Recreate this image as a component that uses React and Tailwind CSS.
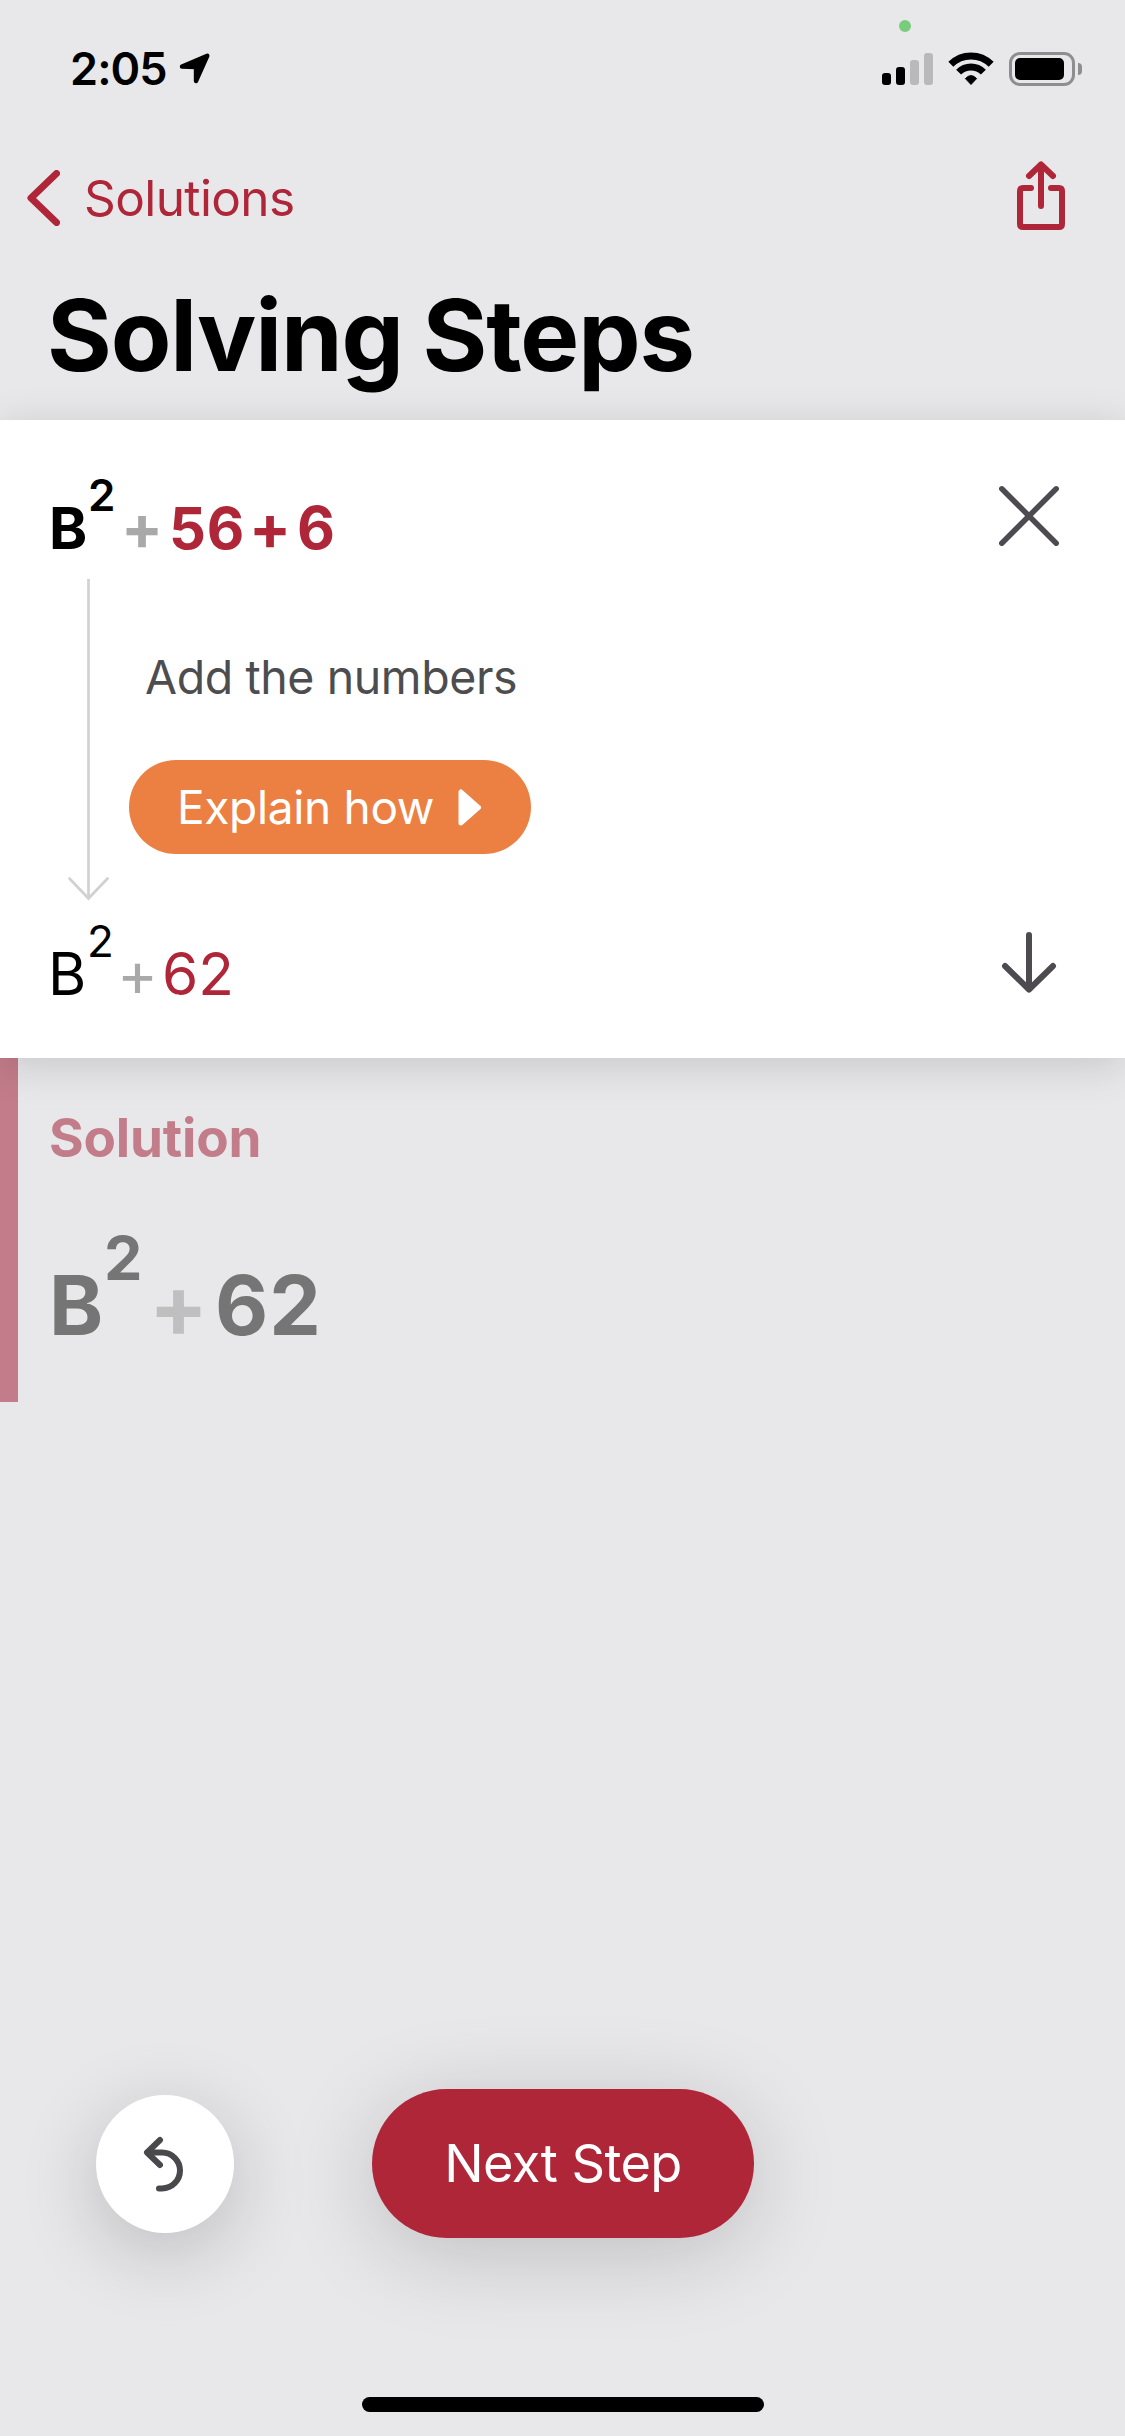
import React from "react";

function StatusBar() {
  return (
    <header className="relative flex h-[140px] shrink-0 items-start">
      <div className="flex pt-[38px] pl-[70px]">
        <span className="w-[108px] text-[45px] leading-[61px] font-semibold tracking-[-0.9px]">2:05</span>
        <svg className="mt-[14px]" width="34" height="34" viewBox="0 0 34 34">
          <path d="M4 14.5 29.3 3.8 18 29V15Z" fill="#000" stroke="#000" strokeWidth="4.4" strokeLinejoin="round" />
        </svg>
      </div>
      <span className="absolute top-[20px] left-[899px] size-[12px] rounded-full bg-[#78cd7d]" />
      <div className="mt-[52px] mr-[43px] ml-auto flex h-[34px] items-start">
        <div className="flex h-[33px] items-end gap-[5px]">
          <span className="h-[12px] w-[9px] rounded-[3px] bg-black" />
          <span className="h-[18px] w-[9px] rounded-[3px] bg-black" />
          <span className="h-[25px] w-[9px] rounded-[3px] bg-[#b9b9bb]" />
          <span className="h-[32px] w-[9px] rounded-[3px] bg-[#b9b9bb]" />
        </div>
        <svg className="ml-[15px]" width="46" height="34" viewBox="0 0 46 34">
          <path d="M2.85 12.35A28.5 28.5 0 0 1 43.15 12.35" fill="none" stroke="#000" strokeWidth="7" />
          <path d="M10.63 20.13A17.5 17.5 0 0 1 35.37 20.13" fill="none" stroke="#000" strokeWidth="7" />
          <path d="M23 32.5 17.4 26.6Q23 20.6 28.6 26.6Z" fill="#000" stroke="#000" strokeWidth="1" strokeLinejoin="round" />
        </svg>
        <div className="ml-[15px] flex items-center">
          <div className="h-[34px] w-[66px] rounded-[11px] border-[3px] border-[#8e8e90] p-[3px]">
            <div className="h-[22px] w-[49px] rounded-[5px] bg-black" />
          </div>
          <span className="ml-[3px] h-[12px] w-[4px] rounded-r-full bg-[#8e8e90]" />
        </div>
      </div>
    </header>
  );
}

function NavBar() {
  return (
    <nav className="flex h-[120px] shrink-0 items-start text-[#af2639]">
      <svg className="mt-[30px] ml-[27px]" width="33" height="56" viewBox="0 0 33 56">
        <path d="M29.5 3.5 4 28 29.5 52.5" fill="none" stroke="currentColor" strokeWidth="7" strokeLinecap="round" strokeLinejoin="round" />
      </svg>
      <span className="mt-[28px] ml-[24px] text-[49.5px] leading-[60px] tracking-[-0.6px]">Solutions</span>
      <svg className="mt-[21px] mr-[60px] ml-auto" width="48" height="69" viewBox="0 0 48 69" fill="none" stroke="currentColor" strokeWidth="6" strokeLinecap="round" strokeLinejoin="round">
        <path d="M14 27H6Q3 27 3 30V63Q3 66 6 66H42Q45 66 45 63V30Q45 27 42 27H34" />
        <path d="M24 45V4M12 15 24 3.5 36 15" />
      </svg>
    </nav>
  );
}

function StepCard() {
  return (
    <section className="relative z-10 flex h-[638px] shrink-0 flex-col bg-white shadow-[0_7px_40px_rgba(0,0,0,0.15)]">
      <div className="flex h-[159px] shrink-0 items-start pr-[65px] pl-[49px]">
        <div className="mt-[53px] flex items-start text-[57.8px] leading-[70px] font-bold">
          <span className="mt-[20px] w-[39px]">B</span>
          <span className="w-[33px] text-[44px] leading-[44px] font-semibold">2</span>
          <span className="mt-[20px] w-[48px] text-[62px] text-[#a9a9a9]">+</span>
          <span className="mt-[20px] w-[80px] tracking-[0.8px] text-[#af2639]">56</span>
          <span className="mt-[20px] w-[48px] text-[62px] text-[#af2639]">+</span>
          <span className="mt-[20px] text-[58.5px] text-[#af2639]">6</span>
        </div>
        <svg className="mt-[65px] ml-auto" width="62" height="62" viewBox="0 0 62 62">
          <path d="M3.8 3.8 58.2 58.2M58.2 3.8 3.8 58.2" stroke="#4d4b50" strokeWidth="5.5" strokeLinecap="round" />
        </svg>
      </div>

      <div className="flex h-[323px] shrink-0 items-start pl-[66px]">
        <svg width="45" height="322" viewBox="0 0 45 322" fill="none" stroke="#d1d1d1" strokeWidth="2.7">
          <path d="M22.5 0V320" />
          <path d="M3.5 299.5 22.5 319.5 41.5 299.5" strokeLinecap="round" />
        </svg>
        <div className="ml-[18px] flex flex-col items-start">
          <p className="mt-[68px] pl-[16px] text-[46.5px] leading-[60px] tracking-[-0.41px] whitespace-nowrap text-[#4d4d50]">Add the numbers</p>
          <button className="mt-[53px] flex h-[94px] w-[402px] items-center rounded-full bg-[#ec8042] pl-[48px] text-[46px] leading-[60px] tracking-[-0.33px] whitespace-nowrap text-white">
            Explain how
            <svg className="ml-[24px]" width="24" height="37" viewBox="0 0 24 37">
              <path d="M3 3V34L20.5 18.5Z" fill="#fff" stroke="#fff" strokeWidth="5" strokeLinejoin="round" />
            </svg>
          </button>
        </div>
      </div>

      <div className="flex items-start pr-[68px] pl-[48px]">
        <div className="mt-[17px] flex items-start text-[58.5px] leading-[70px]">
          <span className="mt-[20px] w-[39px]">B</span>
          <span className="w-[30px] text-[44px] leading-[44px]">2</span>
          <span className="mt-[20px] w-[45px] text-[62px] text-[#a9a9a9]">+</span>
          <span className="mt-[20px] text-[#af2639]">62</span>
        </div>
        <svg className="mt-[29px] ml-auto" width="56" height="63" viewBox="0 0 56 63" fill="none" stroke="#4d4b50" strokeWidth="6" strokeLinecap="round" strokeLinejoin="round">
          <path d="M28 4V58M4 35 28 58.5 52 35" />
        </svg>
      </div>
    </section>
  );
}

function Solution() {
  return (
    <section className="flex h-[344px] shrink-0 flex-col border-l-[18px] border-[#c37c8a] pl-[31px]">
      <h2 className="mt-[50px] text-[53px] leading-[60px] font-bold tracking-[-0.2px] text-[#c37c8a]">Solution</h2>
      <div className="mt-[60px] flex items-start text-[82px] leading-[100px] font-bold text-[#757575]">
        <span className="mt-[28px] w-[55px]">B</span>
        <span className="w-[45px] text-[61px] leading-[61px]">2</span>
        <span className="mt-[28px] w-[66px] text-[87px] text-[#bfbfbf]">+</span>
        <span className="mt-[28px] tracking-[1px]">62</span>
      </div>
    </section>
  );
}

function Controls() {
  return (
    <footer className="mt-auto flex h-[347px] shrink-0 flex-col">
      <div className="flex items-start pl-[96px]">
        <button className="mt-[6px] flex size-[138px] items-start rounded-full bg-white shadow-[0_18px_80px_rgba(0,0,0,0.2)]">
          <svg className="mt-[41px] ml-[47px]" width="42" height="56" viewBox="0 0 42 56" fill="none" stroke="#48484d" strokeWidth="6" strokeLinecap="round" strokeLinejoin="round">
            <path d="M17 4 4 16.5 17 29" />
            <path d="M5 16.5H19A18 18 0 0 1 19 52.5H16" />
          </svg>
        </button>
        <button className="ml-[138px] flex h-[149px] w-[382px] items-center justify-center rounded-full bg-[#af2639] pb-[1px] text-[52.3px] leading-[60px] tracking-[-0.59px] whitespace-nowrap text-white shadow-[0_15px_90px_rgba(0,0,0,0.18)]">
          Next Step
        </button>
      </div>
      <div className="mx-auto mt-auto mb-[24px] h-[15px] w-[402px] rounded-full bg-black" />
    </footer>
  );
}

export default function App() {
  return (
    <main className="flex h-[2436px] w-[1125px] flex-col overflow-hidden bg-[#e8e8ea] font-['Inter',sans-serif] text-black">
      <StatusBar />
      <NavBar />
      <h1 className="h-[160px] shrink-0 pt-[15px] pl-[47px] text-[99px] leading-[120px] font-bold tracking-[-1.1px] [word-spacing:-3px] whitespace-nowrap">Solving Steps</h1>
      <StepCard />
      <Solution />
      <Controls />
    </main>
  );
}
